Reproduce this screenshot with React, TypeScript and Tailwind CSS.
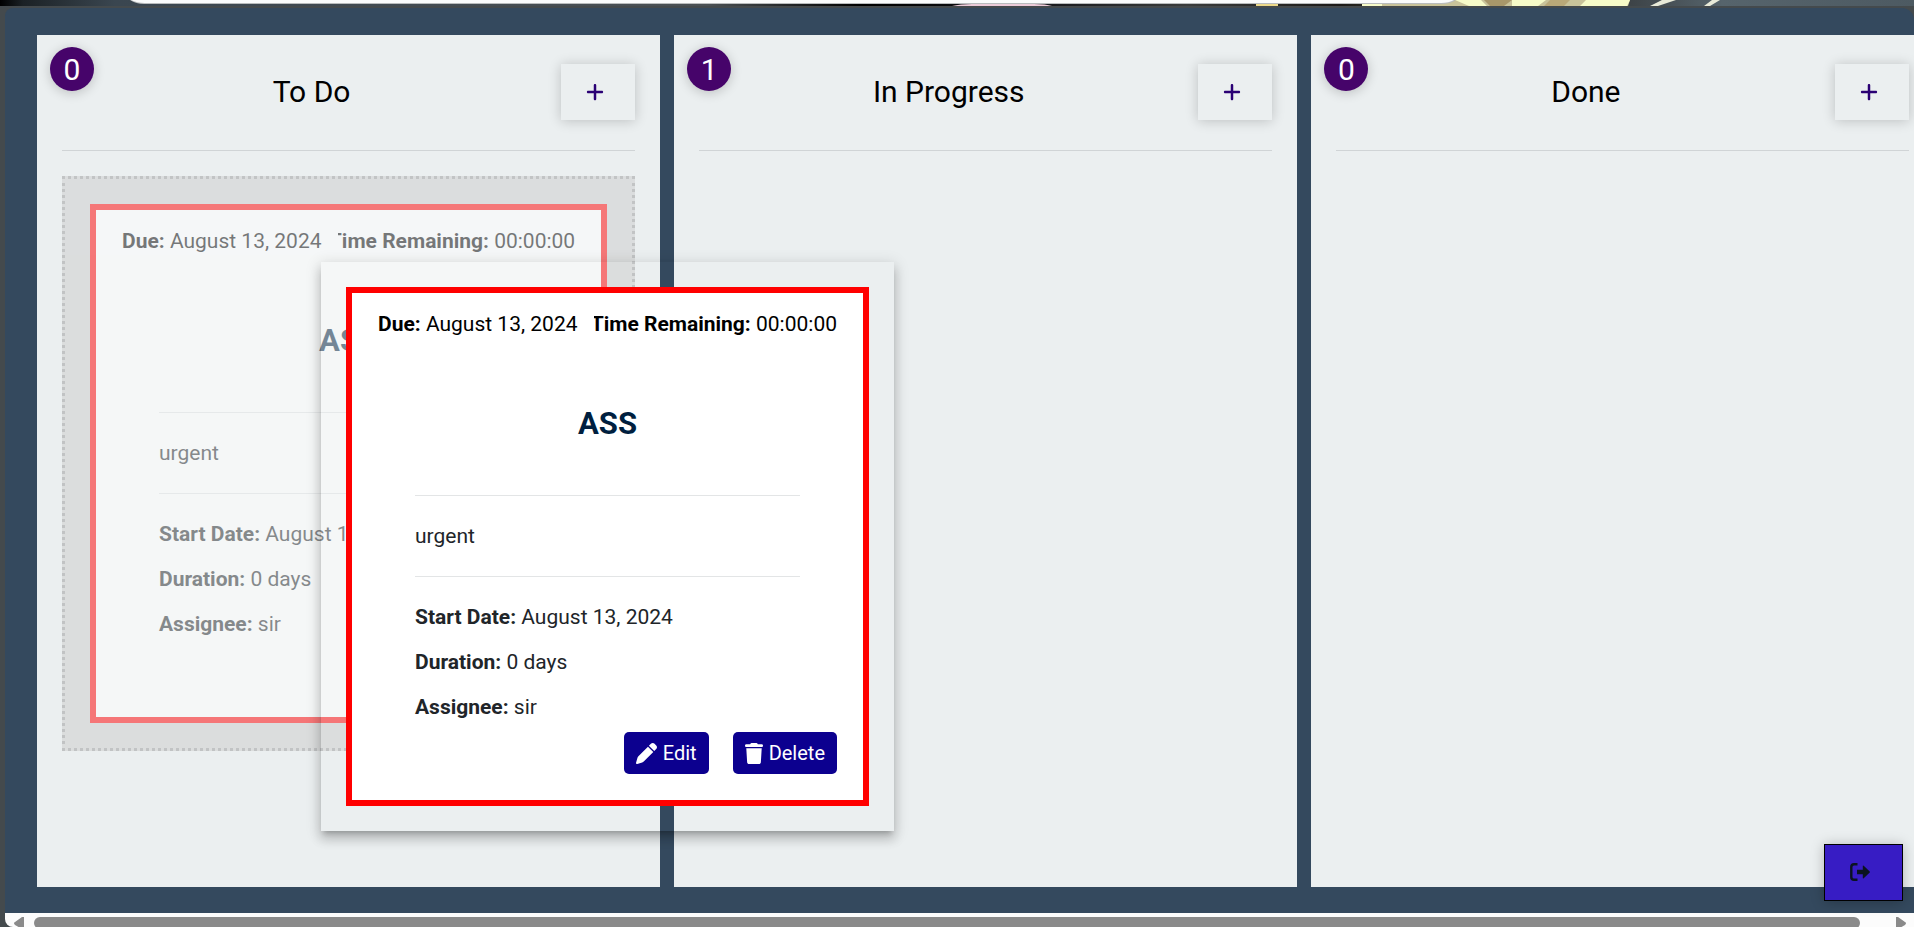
import React from "react";
import { FaPen, FaPlus, FaTrash } from "react-icons/fa6";

const columns = [
  { title: "To Do", count: 0 },
  { title: "In Progress", count: 1 },
  { title: "Done", count: 0 },
];

function Backdrop() {
  return (
    <div className="flex h-[6px] shrink-0 overflow-hidden bg-[#23282c]">
      <svg className="h-[6px] w-full" viewBox="0 0 1914 6" preserveAspectRatio="none" aria-hidden="true">
        <defs>
          <linearGradient id="sky" x1="0" x2="1" y1="0" y2="0">
            <stop offset="0" stopColor="#000" />
            <stop offset="0.012" stopColor="#1b2125" />
            <stop offset="0.06" stopColor="#3a4650" />
            <stop offset="0.37" stopColor="#4a5054" />
            <stop offset="0.45" stopColor="#000" />
            <stop offset="0.54" stopColor="#15161a" />
            <stop offset="0.62" stopColor="#3a3c3c" />
            <stop offset="0.7" stopColor="#1c1a18" />
            <stop offset="0.75" stopColor="#4a4a38" />
            <stop offset="0.85" stopColor="#3c4246" />
            <stop offset="0.9" stopColor="#56646c" />
            <stop offset="1" stopColor="#4d5a62" />
          </linearGradient>
        </defs>
        <rect width="1914" height="6" fill="url(#sky)" />
        <path d="M952 6q8-2 20-2h62q12 0 18 2Z" fill="#eccbd8" />
        <rect x="1256" y="4" width="22" height="2" fill="#ecd98a" />
        <path d="M1362 6V4L1440 3l15-3h175l-2 6Z" fill="#c9c39a" />
        <path d="M1362 6V4h20v2ZM1455 0h26l6 6h-18ZM1512 0h34l-8 6h-26ZM1586 0h44l-3 6h-47Z" fill="#f7fbc8" />
        <path d="M1484 0h28l-8 6h-14Z" fill="#a8976a" />
        <path d="M1550 0h20l-6 6h-20Z" fill="#b9a878" />
        <path d="M1662 0h14l-18 6h-8ZM1712 0h8l-10 6h-6Z" fill="#e8ead8" />
        <path d="M130 0H1456q-6 4-14 4H144q-8 0-14-4Z" fill="#b9bcbd" />
        <path d="M131 0H1454q-5 3-13 3H145q-8 0-14-3Z" fill="#fbfcfc" />
      </svg>
    </div>
  );
}

function TaskCard({ actions = false }: { actions?: boolean }) {
  return (
    <article className="flex h-[519px] flex-col border-6 border-[#ff0000] bg-white px-[26px] text-[21px] leading-[45px] text-[#212529]">
      <div className="mt-[9px] flex justify-between gap-4 whitespace-nowrap text-black">
        <p className="shrink-0">
          <strong>Due:</strong> August 13, 2024
        </p>
        <p className="flex min-w-0 justify-end overflow-hidden">
          <span>
            <strong>Time Remaining:</strong> 00:00:00
          </span>
        </p>
      </div>
      <div className="px-[37px]">
        <h3 className="mt-[55px] text-center text-[31px] leading-[44px] font-bold text-[#001f3f]">ASS</h3>
        <hr className="mt-[49px] border-[#e3e5e6]" />
        <p className="mt-[18px]">urgent</p>
        <hr className="mt-[17px] border-[#e3e5e6]" />
        <div className="mt-[18px]">
          <p>
            <strong>Start Date:</strong> August 13, 2024
          </p>
          <p>
            <strong>Duration:</strong> 0 days
          </p>
          <p>
            <strong>Assignee:</strong> sir
          </p>
        </div>
      </div>
      {actions && (
        <div className="mt-[2px] flex justify-end gap-6 text-[20px] leading-[42px] text-white">
          <button className="flex items-center gap-[6px] rounded-[5px] bg-[#0c008f] px-3">
            <FaPen className="size-[21px]" />
            Edit
          </button>
          <button className="flex items-center gap-[6px] rounded-[5px] bg-[#0c008f] px-3">
            <FaTrash className="size-[21px] w-[18px]" preserveAspectRatio="none" />
            Delete
          </button>
        </div>
      )}
    </article>
  );
}

function Column({ title, count, children }: { title: string; count: number; children?: React.ReactNode }) {
  return (
    <section className="relative bg-[#ebeff0] px-[25px] pt-[29px] text-black">
      <span className="absolute top-3 left-[13px] flex size-11 items-center justify-center rounded-full bg-[#46046a] text-[30px] text-white shadow-[0_2px_12px_rgba(0,0,0,0.2)]">
        {count}
      </span>
      <header className="flex h-[87px] items-start border-b border-[#d0d4d6]">
        <h2 className="flex-1 text-center text-[30px] leading-[56px]">{title}</h2>
        <button
          aria-label={`Add task to ${title}`}
          className="flex h-[56px] w-[74px] items-center justify-center bg-[#ebeff0] pr-[7px] text-[#2a0074] shadow-[0_1px_12px_rgba(0,0,0,0.2)]"
        >
          <FaPlus className="size-5" />
        </button>
      </header>
      {children}
    </section>
  );
}

function Scrollbar() {
  return (
    <div className="flex h-[14px] shrink-0 overflow-hidden rounded-bl-lg bg-[#fcfcfc] pt-1 pr-2 pl-[9px] text-[#8a8a8a]">
      <svg className="h-3 w-[10px] shrink-0" viewBox="0 0 10 12" fill="currentColor" aria-hidden="true">
        <path d="M10 0v12H8L1 8Q-1 6 1 5L8 0Z" />
      </svg>
      <div className="mr-9 ml-[10px] h-3 flex-1 rounded-full bg-[#8a8a8a]" />
      <svg className="h-3 w-[10px] shrink-0" viewBox="0 0 10 12" fill="currentColor" aria-hidden="true">
        <path d="M0 0v12h2l7-4q2-2 0-3L2 0Z" />
      </svg>
    </div>
  );
}

export default function App() {
  return (
    <div className="relative flex h-screen flex-col overflow-hidden bg-[#444a4d] font-[Roboto,sans-serif]">
      <Backdrop />
      <main className="mt-[2px] ml-[5px] flex min-h-0 flex-1 flex-col">
        <div className="relative flex min-h-0 flex-1 overflow-hidden rounded-tl-lg rounded-tr-xl bg-[#34495e] pt-[27px] pb-[26px] pl-8">
          <div className="grid w-full auto-cols-[33.2%] grid-flow-col gap-[14px]">
            {columns.map((column, index) => (
              <Column key={column.title} {...column}>
                {index === 0 && (
                  <div className="mt-[25px] border-3 border-dotted border-[#999] bg-[#ccc] px-[25px] py-[25px] opacity-50">
                    <TaskCard />
                  </div>
                )}
              </Column>
            ))}
          </div>
        </div>
        <Scrollbar />
      </main>

      <div className="absolute top-[262px] left-[321px] w-[573px] p-[25px] shadow-[0_5px_5px_-3px_rgba(0,0,0,0.2),0_8px_10px_1px_rgba(0,0,0,0.14),0_3px_14px_2px_rgba(0,0,0,0.12)]">
        <TaskCard actions />
      </div>

      <button
        aria-label="Log out"
        className="absolute right-[11px] bottom-[26px] flex h-[57px] w-[79px] items-center justify-center border border-black bg-[#371cc4] pr-[7px] pb-[2px] shadow-[0_1px_12px_rgba(0,0,0,0.25)]"
      >
        <svg className="h-[18px] w-5" viewBox="0 0 20 18" fill="none" aria-hidden="true">
          <path d="M7.5 1.3H4Q1.3 1.3 1.3 4v10q0 2.7 2.7 2.7h3.5" stroke="#0a1320" strokeWidth="2.4" />
          <path d="M7 6.8h5.8V3.2q0-1 .9-.4l5.8 5.4q.8.8 0 1.6l-5.8 5.4q-.9.6-.9-.4v-3.6H7Z" fill="#0a1320" />
        </svg>
      </button>
    </div>
  );
}
